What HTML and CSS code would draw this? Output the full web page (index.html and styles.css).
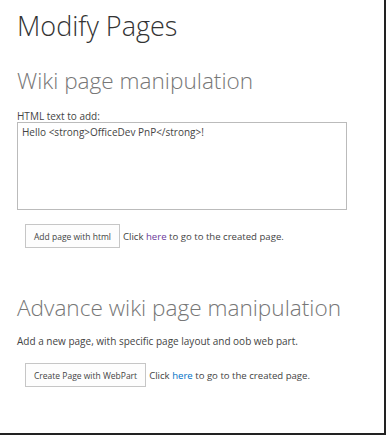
FILE: index.html
```html
<!DOCTYPE HTML>
<html>
 <head>
  <meta name="viewport" content="width=device-width, initial-scale=1.0">
  <link rel="stylesheet" href="styles.css">
 </head>
<body>
<div class="frame">
  <h1 class="page-title">Modify Pages</h1>

  <h2 class="section-title">Wiki page manipulation</h2>
  <div class="field-label">HTML text to add:</div>
  <div class="html-box">Hello &lt;strong&gt;OfficeDev PnP&lt;/strong&gt;!</div>
  <div class="action-row first-row">
    <button class="action-button">Add page with html</button>
    <span class="action-note">Click <a class="visited" href="#">here</a> to go to the created page.</span>
  </div>

  <h2 class="section-title second">Advance wiki page manipulation</h2>
  <p class="intro">Add a new page, with specific page layout and oob web part.</p>
  <div class="action-row">
    <button class="action-button">Create Page with WebPart</button>
    <span class="action-note">Click <a href="#">here</a> to go to the created page.</span>
  </div>
</div>
</body>
</html>
```

FILE: styles.css
```css
* {
  box-sizing: border-box;
}
html, body {
  margin: 0;
  padding: 0;
  background: #fff;
}
.frame {
  width: 386px;
  height: 435px;
  border-right: 2px solid #222;
  border-bottom: 2px solid #222;
  padding: 0 0 0 17px;
  font-family: "Open Sans", "Noto Sans", sans-serif;
  color: #444;
  overflow: hidden;
}
.page-title {
  margin: 0;
  padding-top: 10px;
  font-size: 27px;
  line-height: 32px;
  font-weight: 300;
  color: #333;
}
.section-title {
  margin: 25px 0 0 0;
  font-size: 22.6px;
  line-height: 28px;
  font-weight: 300;
  color: #777;
}
.section-title.second {
  margin-top: 46px;
}
.field-label {
  margin-top: 15px;
  font-size: 10px;
  line-height: 12px;
}
.html-box {
  width: 330px;
  height: 88px;
  margin-top: 0;
  border: 1px solid #bbb;
  padding: 3px 4px;
  font-size: 10px;
  line-height: 13px;
}
.action-row {
  display: flex;
  align-items: center;
  gap: 3px;
  margin-left: 8px;
}
.first-row {
  margin-top: 14px;
}
.action-button {
  height: 24px;
  padding: 0 8px;
  border: 1px solid #c6c6c6;
  background: #fdfdfd;
  font-family: inherit;
  font-size: 8.5px;
  color: #444;
}
.action-note {
  font-size: 9.6px;
}
.action-note a {
  color: #0072c6;
  text-decoration: none;
}
.action-note a.visited {
  color: #6b3a9a;
}
.intro {
  margin: 12px 0 15px 0;
  font-size: 10px;
}
```
